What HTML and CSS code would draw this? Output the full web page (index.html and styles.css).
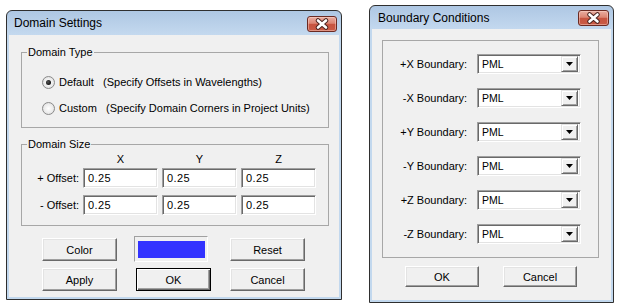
FILE: index.html
```html
<!DOCTYPE html>
<html>
<head>
<meta charset="utf-8">
<title>Dialogs</title>
<link rel="stylesheet" href="styles.css">
</head>
<body>
<div class="desk">
  <section class="win win-domain">
    <header class="titlebar">
      <span class="title">Domain Settings</span>
      <button class="close" aria-label="Close">
        <svg width="30" height="16" viewBox="0 0 30 16"><path d="M11 4.5 L19 11.5 M19 4.5 L11 11.5" stroke="#4a2420" stroke-width="4.6" stroke-linecap="round"/><path d="M11 4.5 L19 11.5 M19 4.5 L11 11.5" stroke="#fff" stroke-width="2.6" stroke-linecap="round"/></svg>
      </button>
    </header>
    <div class="client">
      <fieldset class="group group-type">
        <legend>Domain Type</legend>
        <div class="radio-row"><span class="radio checked"></span><span class="radio-text">Default&nbsp;&nbsp;&nbsp;(Specify Offsets in Wavelengths)</span></div>
        <div class="radio-row"><span class="radio"></span><span class="radio-text">Custom&nbsp;&nbsp;&nbsp;(Specify Domain Corners in Project Units)</span></div>
      </fieldset>
      <fieldset class="group group-size">
        <legend>Domain Size</legend>
        <div class="size-grid">
          <span></span><span class="axis">X</span><span class="axis">Y</span><span class="axis">Z</span>
          <span class="row-label">+ Offset:</span><span class="field">0.25</span><span class="field">0.25</span><span class="field">0.25</span>
          <span class="row-label">- Offset:</span><span class="field">0.25</span><span class="field">0.25</span><span class="field">0.25</span>
        </div>
      </fieldset>
      <div class="btn-grid">
        <button class="btn">Color</button>
        <div class="swatch"><span class="swatch-fill"></span></div>
        <button class="btn">Reset</button>
        <button class="btn">Apply</button>
        <button class="btn default">OK</button>
        <button class="btn">Cancel</button>
      </div>
    </div>
  </section>

  <section class="win win-boundary">
    <header class="titlebar">
      <span class="title">Boundary Conditions</span>
      <button class="close" aria-label="Close">
        <svg width="31" height="16" viewBox="0 0 31 16"><path d="M11.5 4.5 L19.5 11.5 M19.5 4.5 L11.5 11.5" stroke="#4a2420" stroke-width="4.6" stroke-linecap="round"/><path d="M11.5 4.5 L19.5 11.5 M19.5 4.5 L11.5 11.5" stroke="#fff" stroke-width="2.6" stroke-linecap="round"/></svg>
      </button>
    </header>
    <div class="client">
      <fieldset class="group group-bc">
        <div class="bc-grid">
          <span class="row-label">+X Boundary:</span><div class="combo"><span class="combo-text">PML</span><span class="combo-btn"><svg width="7" height="4" viewBox="0 0 7 4"><path d="M0 0 H7 L3.5 4 Z" fill="#000"/></svg></span></div>
          <span class="row-label">-X Boundary:</span><div class="combo"><span class="combo-text">PML</span><span class="combo-btn"><svg width="7" height="4" viewBox="0 0 7 4"><path d="M0 0 H7 L3.5 4 Z" fill="#000"/></svg></span></div>
          <span class="row-label">+Y Boundary:</span><div class="combo"><span class="combo-text">PML</span><span class="combo-btn"><svg width="7" height="4" viewBox="0 0 7 4"><path d="M0 0 H7 L3.5 4 Z" fill="#000"/></svg></span></div>
          <span class="row-label">-Y Boundary:</span><div class="combo"><span class="combo-text">PML</span><span class="combo-btn"><svg width="7" height="4" viewBox="0 0 7 4"><path d="M0 0 H7 L3.5 4 Z" fill="#000"/></svg></span></div>
          <span class="row-label">+Z Boundary:</span><div class="combo"><span class="combo-text">PML</span><span class="combo-btn"><svg width="7" height="4" viewBox="0 0 7 4"><path d="M0 0 H7 L3.5 4 Z" fill="#000"/></svg></span></div>
          <span class="row-label">-Z Boundary:</span><div class="combo"><span class="combo-text">PML</span><span class="combo-btn"><svg width="7" height="4" viewBox="0 0 7 4"><path d="M0 0 H7 L3.5 4 Z" fill="#000"/></svg></span></div>
        </div>
      </fieldset>
      <div class="bc-buttons">
        <button class="btn">OK</button>
        <button class="btn">Cancel</button>
      </div>
    </div>
  </section>
</div>
</body>
</html>
```

FILE: styles.css
```css
* { box-sizing: border-box; }
html, body { margin: 0; padding: 0; background: #fff; }
body {
  font-family: "Liberation Sans", Arial, sans-serif;
  font-size: 11px;
  color: #000;
}
.desk {
  display: flex;
  align-items: flex-start;
  width: 620px;
  height: 307px;
}

/* window frame */
.win {
  display: flex;
  flex-direction: column;
  border: 1px solid #2f2f2f;
  border-radius: 6px 6px 0 0;
  padding: 0 2px 2px;
  background: linear-gradient(to bottom, #aec7e3 0, #c4d9ef 24px, #c2d8ee 24px, #c2d8ee 100%);
}
.win-domain { width: 336px; height: 290px; margin: 10px 0 0 6px; }
.win-boundary { width: 245px; height: 298px; margin: 5px 0 0 27px; }

.titlebar {
  display: flex;
  justify-content: space-between;
  align-items: center;
  flex: none;
}
.win-domain .titlebar { height: 24px; padding-left: 5px; }
.win-boundary .titlebar { height: 23px; padding-left: 6px; }
.title { font-size: 12px; line-height: 14px; }

.close {
  align-self: flex-start;
  display: flex;
  padding: 0;
  height: 16px;
  border: 1px solid #6b2a22;
  border-radius: 3px;
  background: linear-gradient(to bottom, #e9ada0 0%, #dc8573 45%, #c75440 52%, #c95b45 100%);
  box-shadow: inset 0 0 0 1px rgba(255, 220, 210, 0.45);
  margin-right: 2px;
  overflow: hidden;
}
.close svg { display: block; margin: -1px; }
.win-domain .close { width: 30px; margin-top: 5px; }
.win-boundary .close { width: 31px; margin-top: 4px; }

.client {
  flex: 1;
  background: #f0f0f0;
  display: flex;
  flex-direction: column;
}

/* group boxes */
.group {
  margin: 0;
  border: 1px solid #a7a7a7;
  min-width: 0;
}
.group legend {
  padding: 0 1px;
  line-height: 13px;
}
.group-type {
  margin: 11px 10px 0 12px;
  padding: 15px 6px 11px 5px;
}
.radio-row {
  display: flex;
  align-items: center;
  height: 16px;
  margin-left: 15px;
  gap: 4px;
}
.radio-row + .radio-row { margin-top: 10px; }
.radio {
  width: 13px;
  height: 13px;
  border-radius: 50%;
  border: 1px solid #8a8a8a;
  background: radial-gradient(circle, #ffffff 0, #ececec 55%, #d3d3d3 100%);
  display: flex;
  align-items: center;
  justify-content: center;
  flex: none;
}
.radio.checked::after {
  content: "";
  width: 5px;
  height: 5px;
  border-radius: 50%;
  background: radial-gradient(circle at 40% 40%, #555 0, #111 70%);
}
.radio-text { white-space: nowrap; }

.group-size {
  margin: 10px 10px 0 12px;
  padding: 2px 6px 10px 5px;
}
.size-grid {
  display: grid;
  grid-template-columns: 52px 75px 75px 75px;
  column-gap: 4px;
  row-gap: 7px;
}
.axis {
  text-align: center;
  line-height: 13px;
  margin-bottom: -5px;
}
.row-label {
  text-align: right;
  white-space: nowrap;
  align-self: center;
}
.field {
  height: 20px;
  background: #fff;
  border: 1px solid;
  border-color: #a0a0a0 #fff #fff #a0a0a0;
  box-shadow: inset 1px 1px #696969, inset -1px -1px #e3e3e3;
  padding-left: 4px;
  display: flex;
  align-items: center;
  letter-spacing: 0.4px;
}

/* buttons */
.btn {
  font: inherit;
  color: #000;
  background: #f0f0f0;
  border: 1px solid;
  border-color: #fff #696969 #696969 #fff;
  box-shadow: inset -1px -1px #a0a0a0, inset 1px 1px #e3e3e3;
  padding: 0;
  margin: 0;
}
.btn.default {
  border-color: #000;
  box-shadow: inset 1px 1px #fff, inset -1px -1px #696969, inset -2px -2px #a0a0a0;
}
.btn-grid {
  display: grid;
  grid-template-columns: 75px 75px 75px;
  grid-auto-rows: 23px;
  column-gap: 19px;
  row-gap: 7px;
  margin: 12px 0 0 33px;
}
.swatch {
  margin: -2px 0 -1px -2px;
  width: 74px;
  border: 1px solid;
  border-color: #a0a0a0 #fff #fff #a0a0a0;
  padding: 4px 2px 3px 3px;
  display: flex;
}
.swatch-fill { flex: 1; background: #3333ff; }

/* boundary dialog */
.group-bc {
  margin: 11px 12px 0 10px;
  padding: 13px 0 13px 1px;
}
.bc-grid {
  display: grid;
  grid-template-columns: 83px 104px;
  grid-auto-rows: 20px;
  column-gap: 10px;
  row-gap: 14px;
}
.combo {
  background: #fff;
  border: 1px solid;
  border-color: #a0a0a0 #fff #fff #a0a0a0;
  box-shadow: inset 1px 1px #696969, inset -1px -1px #e3e3e3;
  padding: 2px;
  display: flex;
  align-items: center;
}
.combo-text {
  flex: 1;
  padding-left: 2px;
  font-size: 10.5px;
}
.combo-btn {
  width: 17px;
  height: 16px;
  background: #f0f0f0;
  border: 1px solid;
  border-color: #e3e3e3 #696969 #696969 #e3e3e3;
  box-shadow: inset 1px 1px #fff, inset -1px -1px #a0a0a0;
  display: flex;
  align-items: center;
  justify-content: center;
}
.combo-btn svg { display: block; }
.bc-buttons {
  display: flex;
  gap: 24px;
  margin: 8px 0 0 33px;
}
.bc-buttons .btn { width: 74px; height: 21px; }
```
